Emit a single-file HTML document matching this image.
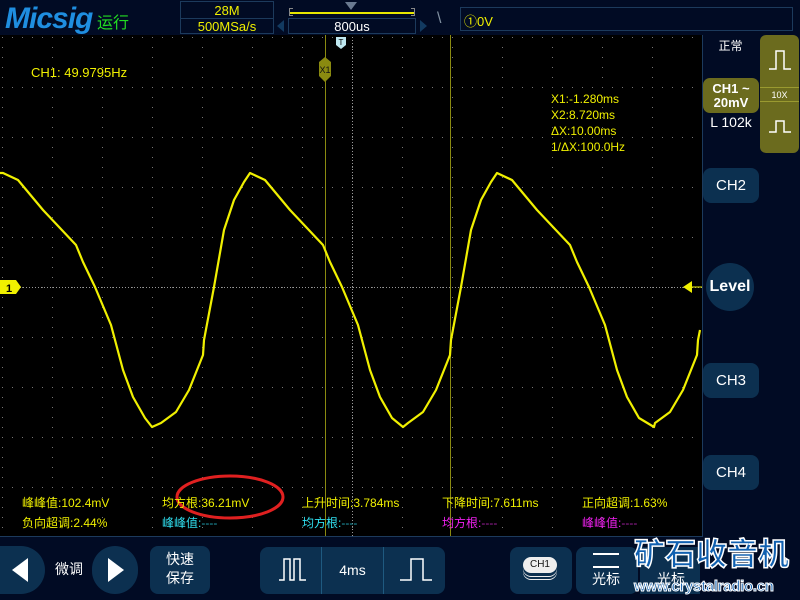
<!DOCTYPE html>
<html><head><meta charset="utf-8"><style>
*{margin:0;padding:0;box-sizing:border-box}
body{width:800px;height:600px;background:#010b24;position:relative;overflow:hidden;font-family:"Liberation Sans","Noto Sans CJK SC",sans-serif}
.a{position:absolute;white-space:nowrap}
.box{position:absolute;border:1px solid #1c3a5c}
.y{color:#f0f000}
.btn{position:absolute;background:#0c3050;border-radius:8px;color:#fff;text-align:center}
.m{position:absolute;font-size:12px;white-space:nowrap}
</style></head><body>
<div class="a" style="left:5px;top:2px;font-size:30px;font-weight:bold;font-style:italic;color:#1f8ee0;letter-spacing:-1px">Micsig</div>
<div class="a" style="left:97px;top:9px;font-size:16px;color:#22dd22">运行</div>
<div class="box" style="left:180px;top:1px;width:94px;height:33px"></div>
<div class="a" style="left:180px;top:18px;width:94px;border-top:1px solid #1c3a5c"></div>
<div class="a y" style="left:180px;top:3px;width:94px;text-align:center;font-size:13px">28M</div>
<div class="a y" style="left:180px;top:19px;width:94px;text-align:center;font-size:13px">500MSa/s</div>
<div class="a" style="left:289px;top:12px;width:126px;height:2px;background:#e8e800"></div>
<div class="a" style="left:289px;top:8px;width:4px;height:8px;border:1px solid #888;border-right:none"></div>
<div class="a" style="left:411px;top:8px;width:4px;height:8px;border:1px solid #888;border-left:none"></div>
<div class="a" style="left:345px;top:2px;width:0;height:0;border-left:6px solid transparent;border-right:6px solid transparent;border-top:8px solid #6a7a90"></div>
<div class="box" style="left:288px;top:18px;width:128px;height:16px"></div>
<div class="a" style="left:288px;top:19px;width:128px;text-align:center;color:#fff;font-size:13px">800us</div>
<div class="a" style="left:277px;top:20px;border-top:6px solid transparent;border-bottom:6px solid transparent;border-right:7px solid #123a60"></div>
<div class="a" style="left:420px;top:20px;border-top:6px solid transparent;border-bottom:6px solid transparent;border-left:7px solid #123a60"></div>
<div class="a" style="left:437px;top:10px;color:#8090a0;font-size:16px">\</div>
<div class="box" style="left:460px;top:7px;width:333px;height:24px"></div>
<div class="a y" style="left:464px;top:11px;font-size:13px">①0V</div>

<div class="a" style="left:0;top:35px;width:703px;height:502px;background:#000;border-right:1px solid #1c3a5c;border-bottom:1px solid #1c3a5c"></div>
<svg class="a" style="left:0;top:0" width="800" height="600">
<defs><pattern id="g" x="2" y="37" width="50" height="50" patternUnits="userSpaceOnUse">
<rect x="0" y="0" width="1" height="1" fill="#777"/>
<rect x="0" y="10" width="1" height="1" fill="#777"/><rect x="0" y="20" width="1" height="1" fill="#777"/><rect x="0" y="30" width="1" height="1" fill="#777"/><rect x="0" y="40" width="1" height="1" fill="#777"/>
<rect x="10" y="0" width="1" height="1" fill="#777"/><rect x="20" y="0" width="1" height="1" fill="#777"/><rect x="30" y="0" width="1" height="1" fill="#777"/><rect x="40" y="0" width="1" height="1" fill="#777"/>
</pattern></defs>
<rect x="2" y="37" width="700" height="499" fill="url(#g)"/>
<line x1="2" y1="287.5" x2="702" y2="287.5" stroke="#999" stroke-dasharray="1 2"/>
<line x1="352.5" y1="37" x2="352.5" y2="536" stroke="#999" stroke-dasharray="1 2"/>
<line x1="325.5" y1="35" x2="325.5" y2="536" stroke="#8a8a10"/>
<line x1="450.5" y1="35" x2="450.5" y2="536" stroke="#8a8a10"/>
<polygon points="319,62 325,57 331,62 331,76 325,82 319,76" fill="#8a8a10"/>
<text x="325" y="73" font-size="9" fill="#111" text-anchor="middle" font-family="Liberation Sans">X1</text>
<polygon points="336,37 346,37 346,45 341,49 336,45" fill="#bfe8f0"/>
<text x="341" y="45" font-size="8" fill="#000" text-anchor="middle" font-family="Liberation Sans">T</text>
<polygon points="0,280 16,280 21,287 16,294 0,294" fill="#f0f000"/>
<text x="6" y="292" font-size="11" font-weight="bold" fill="#000" font-family="Liberation Sans">1</text>
<polygon points="683,287 692,281 692,293" fill="#f0f000"/><line x1="690" y1="287" x2="702" y2="287" stroke="#f0f000"/>
<polyline fill="none" stroke="#f0f000" stroke-width="2.2" stroke-linejoin="round" points="0,173 3,173 18,180 43,210 76,245 83,262 95,287 111,325 123,370 133,397 145,418 152,427 161,423 176,412 189,390 203,355 204,340 214,287 224,230 234,200 244,182 250,173 265,180 290,210 323,245 330,262 342,287 358,325 370,370 380,397 392,418 403,427 408,423 423,412 436,390 450,355 451,340 461,287 471,230 481,200 491,182 497,173 512,180 537,210 570,245 577,262 589,287 605,325 617,370 627,397 639,418 654,427 655,423 670,412 683,390 697,355 698,340 700,330"/>
<ellipse cx="230" cy="497" rx="53" ry="21" fill="none" stroke="#e02020" stroke-width="3"/>
</svg>
<div class="a y" style="left:31px;top:65px;font-size:13px">CH1: 49.9795Hz</div>
<div class="a y" style="left:551px;top:91px;font-size:12px;line-height:16px">X1:-1.280ms<br>X2:8.720ms<br>ΔX:10.00ms<br>1/ΔX:100.0Hz</div>

<div class="m y" style="left:22px;top:494px">峰峰值:102.4mV</div>
<div class="m y" style="left:162px;top:494px">均方根:36.21mV</div>
<div class="m y" style="left:302px;top:494px">上升时间:3.784ms</div>
<div class="m y" style="left:442px;top:494px">下降时间:7.611ms</div>
<div class="m y" style="left:582px;top:494px">正向超调:1.63%</div>
<div class="m y" style="left:22px;top:514px">负向超调:2.44%</div>
<div class="m" style="left:162px;top:514px;color:#30e0f0">峰峰值:<span style="color:#20a0b0">----</span></div>
<div class="m" style="left:302px;top:514px;color:#30e0f0">均方根:<span style="color:#20a0b0">----</span></div>
<div class="m" style="left:442px;top:514px;color:#f020f0">均方根:<span style="color:#a020a0">----</span></div>
<div class="m" style="left:582px;top:514px;color:#f020f0">峰峰值:<span style="color:#a020a0">----</span></div>

<div class="a" style="left:703px;top:37px;width:55px;text-align:center;color:#fff;font-size:12px">正常</div>
<div class="a" style="left:703px;top:78px;width:56px;height:35px;background:#6b6b1e;border-radius:7px;color:#fff;font-weight:bold;font-size:13px;text-align:center;line-height:14px;padding-top:4px">CH1 ~<br>20mV</div>
<div class="a" style="left:703px;top:114px;width:56px;text-align:center;color:#fff;font-size:14px">L 102k</div>
<div class="a" style="left:760px;top:35px;width:39px;height:118px;background:#6b6b1e;border-radius:6px"></div>
<div class="a" style="left:760px;top:87px;width:39px;height:15px;border-top:1px solid #9a9a30;border-bottom:1px solid #9a9a30;color:#fff;font-size:9px;text-align:center;line-height:14px">10X</div>
<svg class="a" style="left:760px;top:35px" width="39" height="118"><path d="M9 34H16V16H24V34H31" fill="none" stroke="#fff" stroke-width="1.5"/><path d="M9 97H16V86H24V97H31" fill="none" stroke="#fff" stroke-width="1.5"/></svg>
<div class="btn" style="left:703px;top:168px;width:56px;height:35px;line-height:35px;font-size:15px">CH2</div>
<div class="a" style="left:706px;top:263px;width:48px;height:48px;border-radius:50%;background:#0c3050;color:#fff;font-weight:bold;font-size:16px;text-align:center;line-height:48px">Level</div>
<div class="btn" style="left:703px;top:363px;width:56px;height:35px;line-height:35px;font-size:15px">CH3</div>
<div class="btn" style="left:703px;top:455px;width:56px;height:35px;line-height:35px;font-size:15px">CH4</div>

<div class="a" style="left:0;top:546px;width:45px;height:48px;border-radius:0 24px 24px 0;background:#0c3050"></div>
<div class="a" style="left:12px;top:558px;border-top:12px solid transparent;border-bottom:12px solid transparent;border-right:16px solid #fff"></div>
<div class="a" style="left:55px;top:559px;color:#fff;font-size:14px">微调</div>
<div class="a" style="left:92px;top:546px;width:46px;height:48px;border-radius:24px;background:#0c3050"></div>
<div class="a" style="left:108px;top:558px;border-top:12px solid transparent;border-bottom:12px solid transparent;border-left:16px solid #fff"></div>
<div class="btn" style="left:150px;top:546px;width:60px;height:48px;font-size:14px;line-height:19px;padding-top:4px">快速<br>保存</div>
<div class="btn" style="left:260px;top:547px;width:185px;height:47px"></div>
<div class="a" style="left:321px;top:547px;width:1px;height:47px;background:#1f5a80"></div>
<div class="a" style="left:383px;top:547px;width:1px;height:47px;background:#1f5a80"></div>
<div class="a" style="left:322px;top:562px;width:61px;text-align:center;color:#fff;font-size:14px">4ms</div>
<svg class="a" style="left:260px;top:547px" width="185" height="47"><path d="M19 33H24V12H30V33H34V12H40V33H46" fill="none" stroke="#fff" stroke-width="1.5"/><path d="M140 33H151V12H163V33H172" fill="none" stroke="#fff" stroke-width="1.5"/></svg>
<div class="btn" style="left:510px;top:547px;width:62px;height:47px"></div>
<div class="a" style="left:523px;top:557px;width:34px;height:16px;border-radius:8px;background:#eee;color:#111;font-size:10px;text-align:center;line-height:16px;box-shadow:0 3px 0 #0c3050,0 4px 0 #eee,0 6px 0 #0c3050,0 7px 0 #eee">CH1</div>
<div class="btn" style="left:576px;top:547px;width:62px;height:47px"></div>
<div class="a" style="left:593px;top:553px;width:26px;height:2px;background:#fff"></div>
<div class="a" style="left:593px;top:566px;width:26px;height:2px;background:#fff"></div>
<div class="a" style="left:592px;top:569px;color:#fff;font-size:14px">光标</div>
<div class="a" style="left:640px;top:547px;width:60px;height:47px;background:#0c3050"></div>
<div class="a" style="left:657px;top:569px;color:#fff;font-size:14px">光标</div>
<div class="a" style="left:634px;top:537px;font-size:31px;line-height:36px;font-weight:bold;color:#1060b0;-webkit-text-stroke:1.5px #fff">矿石收音机</div>
<div class="a" style="left:634px;top:578px;font-size:15px;line-height:18px;font-weight:bold;color:#1060b0;-webkit-text-stroke:1px #fff;letter-spacing:-0.3px">www.crystalradio.cn</div>
</body></html>
